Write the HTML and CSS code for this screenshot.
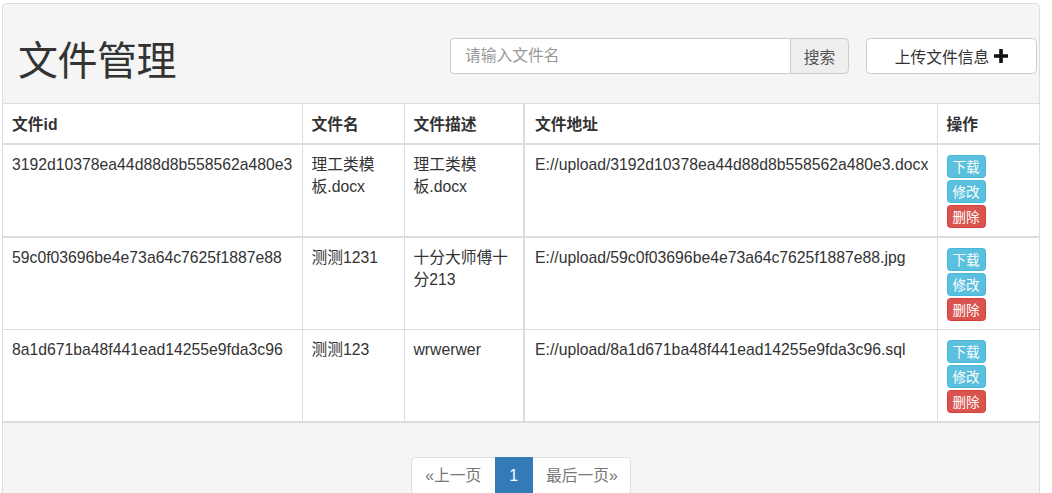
FILE: index.html
```html
<!DOCTYPE html>
<html lang="zh-CN">
<head>
<meta charset="utf-8">
<title>文件管理</title>
<link rel="stylesheet" href="styles.css">
</head>
<body>
<div class="panel">
  <div class="panel-heading">
    <h1 class="title">文件管理</h1>
    <div class="tools">
      <div class="search-group">
        <input class="search-input" type="text" placeholder="请输入文件名">
        <button class="search-btn">搜索</button>
      </div>
      <button class="upload-btn">上传文件信息<svg class="plus" viewBox="0 0 14 14" width="14" height="14"><path d="M5.2 0h3.6v5.2H14v3.6H8.8V14H5.2V8.8H0V5.2h5.2z" fill="#111"/></svg></button>
    </div>
  </div>
  <table class="files">
    <colgroup>
      <col class="c-id"><col class="c-name"><col class="c-desc"><col class="c-addr"><col class="c-ops">
    </colgroup>
    <thead>
      <tr><th>文件id</th><th>文件名</th><th>文件描述</th><th class="addr">文件地址</th><th>操作</th></tr>
    </thead>
    <tbody>
      <tr>
        <td>3192d10378ea44d88d8b558562a480e3</td>
        <td>理工类模板.docx</td>
        <td>理工类模板.docx</td>
        <td class="addr">E://upload/3192d10378ea44d88d8b558562a480e3.docx</td>
        <td><div class="ops"><button class="btn info">下载</button><button class="btn info">修改</button><button class="btn danger">删除</button></div></td>
      </tr>
      <tr class="thick">
        <td>59c0f03696be4e73a64c7625f1887e88</td>
        <td>测测1231</td>
        <td>十分大师傅十分213</td>
        <td class="addr">E://upload/59c0f03696be4e73a64c7625f1887e88.jpg</td>
        <td><div class="ops"><button class="btn info">下载</button><button class="btn info">修改</button><button class="btn danger">删除</button></div></td>
      </tr>
      <tr>
        <td>8a1d671ba48f441ead14255e9fda3c96</td>
        <td>测测123</td>
        <td>wrwerwer</td>
        <td class="addr">E://upload/8a1d671ba48f441ead14255e9fda3c96.sql</td>
        <td><div class="ops"><button class="btn info">下载</button><button class="btn info">修改</button><button class="btn danger">删除</button></div></td>
      </tr>
    </tbody>
  </table>
  <div class="panel-footer">
    <ul class="pagination">
      <li><span class="pg">«上一页</span></li>
      <li><span class="pg active">1</span></li>
      <li><span class="pg">最后一页»</span></li>
    </ul>
  </div>
</div>
</body>
</html>
```
FILE: styles.css
```css
* { box-sizing: border-box; }
html, body { margin: 0; padding: 0; background: #fff; }
body {
  padding: 3px 12px 0 2px;
  font-family: "Liberation Sans", "Noto Sans CJK SC", sans-serif;
  font-size: 15.75px;
  line-height: 22.5px;
  color: #333;
}
.panel {
  width: 1038px;
  border: 1px solid #ddd;
  border-radius: 4.5px;
  background: #f5f5f5;
  overflow: hidden;
}
.panel-heading {
  display: flex;
  justify-content: space-between;
  align-items: flex-start;
  height: 100px;
  padding: 34px 2px 0 15px;
  border-bottom: 1px solid #ddd;
}
.title {
  margin: -5px 0 0 0;
  font-family: "Noto Sans CJK SC", "Liberation Sans", sans-serif;
  font-weight: 400;
  font-size: 40px;
  line-height: 50px;
  color: #333;
  letter-spacing: -0.5px;
}
.tools { display: flex; gap: 17px; }
.search-group { display: flex; width: 399px; height: 36px; }
.search-input {
  width: 340px; height: 36px;
  border: 1px solid #ccc;
  border-right: none;
  border-radius: 4.5px 0 0 4.5px;
  padding: 0 14px;
  font-family: "Liberation Sans", "Noto Sans CJK SC", sans-serif;
  font-size: 15.75px;
  color: #555;
  background: #fff;
  outline: none;
}
.search-input::placeholder { color: #999; }
.search-btn {
  width: 59px; height: 36px;
  border: 1px solid #ccc;
  border-radius: 0 4.5px 4.5px 0;
  background: #eee;
  color: #555;
  font-family: "Liberation Sans", "Noto Sans CJK SC", sans-serif;
  font-size: 15.75px;
  padding: 0;
}
.upload-btn {
  width: 171px; height: 36px;
  border: 1px solid #ccc;
  border-radius: 4.5px;
  background: #fff;
  color: #333;
  font-family: "Liberation Sans", "Noto Sans CJK SC", sans-serif;
  font-size: 15.75px;
  display: flex; align-items: center; justify-content: center;
  gap: 5px;
  padding: 0 0 0 0;
}
.plus { display: block; margin-top: -1px; }
.files {
  width: 100%;
  border-collapse: collapse;
  table-layout: fixed;
  background: #fff;
}
.c-id { width: 299px; }
.c-name { width: 102px; }
.c-desc { width: 120px; }
.c-addr { width: 413px; }
.c-ops { width: 102px; }
.files th, .files td {
  text-align: left;
  vertical-align: top;
  border: 1px solid #ddd;
  padding: 9px 9px;
}
.files tr > :first-child { border-left: none; }
.files tr > :last-child { border-right: none; }
.files thead th {
  border-top: none;
  border-bottom: 2px solid #ddd;
  font-weight: 700;
  height: 38px;
  padding-top: 10px;
  padding-bottom: 6px;
}
.files .addr { border-left: 2px solid #ddd; padding-left: 10px; }
.files td { height: 91px; padding-top: 9px; }
.files tr.thick td { border-top: 2px solid #ddd; }
.files td:last-child { padding: 10px 9px 8px 9px; }
.ops { display: flex; flex-direction: column; align-items: flex-start; gap: 2px; }
.btn {
  height: 23px;
  padding: 0 5px;
  border: 1px solid;
  border-radius: 3.4px;
  font-family: "Noto Sans CJK SC", "Liberation Sans", sans-serif;
  font-size: 13.5px;
  line-height: 20px;
  color: #fff;
}
.btn.info { background: #5bc0de; border-color: #46b8da; }
.btn.danger { background: #d9534f; border-color: #d43f3a; }
.panel-footer {
  padding: 11px 15px;
  height: 80px;
  border-top: 1px solid #ddd;
  display: flex;
  justify-content: center;
}
.pagination {
  list-style: none;
  margin: 23px 0 0 0;
  padding: 0;
  display: flex;
}
.pg {
  display: block;
  height: 38px;
  padding: 7px 13.5px;
  line-height: 22.5px;
  border: 1px solid #ddd;
  background: #fff;
  color: #777;
  margin-left: -1px;
}
.pagination li:first-child .pg { border-radius: 4.5px 0 0 4.5px; margin-left: 0; }
.pagination li:last-child .pg { border-radius: 0 4.5px 4.5px 0; padding-right: 12.5px; }
.pg.active { background: #337ab7; border-color: #337ab7; color: #fff; position: relative; z-index: 1; }
```
